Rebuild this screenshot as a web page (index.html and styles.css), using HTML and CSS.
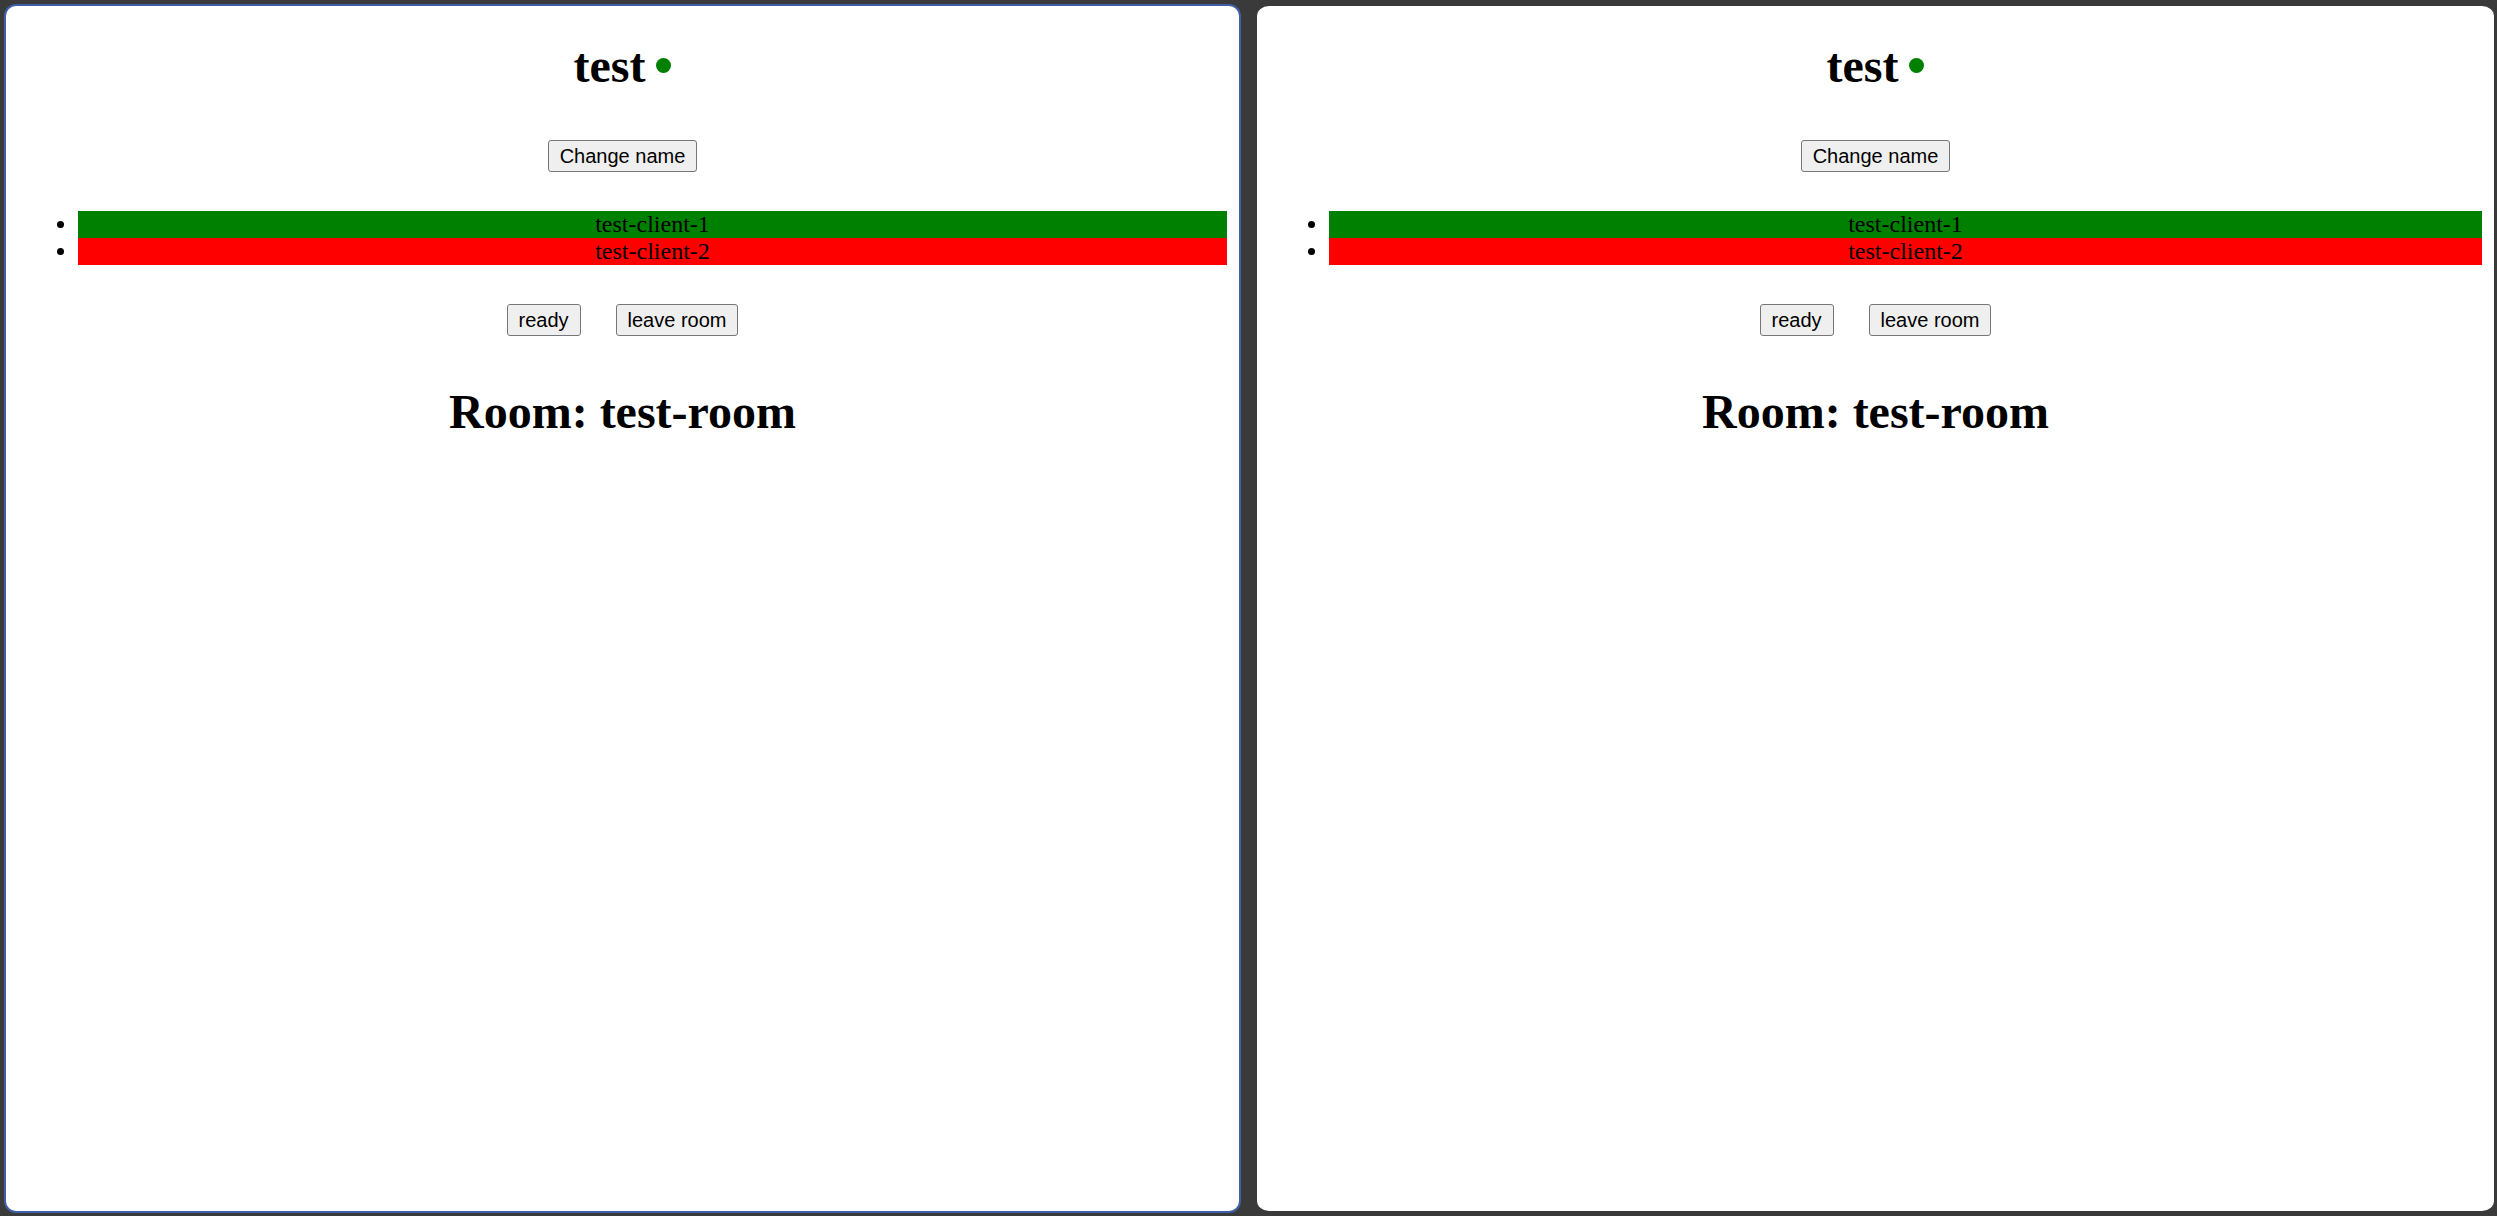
FILE: index.html
```html
<!DOCTYPE html>
<html>
<head>
<meta charset="utf-8">
<title>Rooms</title>
<link rel="stylesheet" href="styles.css">
</head>
<body>
<div class="desk">
  <section class="pane pane-focused">
    <h1 class="title">test<span class="dot"></span></h1>
    <div class="name-row"><button class="btn">Change name</button></div>
    <ul class="clients">
      <li class="client ready">test-client-1</li>
      <li class="client waiting">test-client-2</li>
    </ul>
    <div class="actions"><button class="btn">ready</button><button class="btn">leave room</button></div>
    <h1 class="room">Room: test-room</h1>
  </section>
  <section class="pane">
    <h1 class="title">test<span class="dot"></span></h1>
    <div class="name-row"><button class="btn">Change name</button></div>
    <ul class="clients">
      <li class="client ready">test-client-1</li>
      <li class="client waiting">test-client-2</li>
    </ul>
    <div class="actions"><button class="btn">ready</button><button class="btn">leave room</button></div>
    <h1 class="room">Room: test-room</h1>
  </section>
</div>
</body>
</html>
```

FILE: styles.css
```css
html, body {
  margin: 0;
  padding: 0;
  height: 100%;
}
body {
  background: #3a3a3a;
  font-family: "Liberation Serif", "Times New Roman", serif;
  font-size: 24px;
  color: #000;
}
.desk {
  box-sizing: border-box;
  height: 100vh;
  padding: 4px 3px 3px 4px;
  display: grid;
  grid-template-columns: 1fr 1fr;
  gap: 16px;
}
.pane {
  min-width: 0;
  background: #fff;
  border-style: solid;
  border-color: #3a3a3a;
  border-width: 2px 0;
  border-radius: 12px;
  padding: 0 12px;
  overflow: hidden;
}
.pane-focused {
  border-width: 2px;
  border-color: #3f5fa6;
}
.title {
  margin: 32px 0 0;
  font-size: 48px;
  font-weight: bold;
  text-align: center;
  line-height: 55px;
}
.dot {
  display: inline-block;
  width: 15px;
  height: 15px;
  border-radius: 50%;
  background: #008000;
  margin-left: 11px;
  vertical-align: 9px;
}
.name-row {
  margin-top: 47px;
  display: flex;
  justify-content: center;
}
.btn {
  box-sizing: border-box;
  height: 32px;
  padding: 0 11px;
  font-family: "Liberation Sans", Arial, sans-serif;
  font-size: 20px;
  color: #000;
  background: #efefef;
  border: 1px solid #767676;
  border-radius: 3px;
}
.clients {
  margin: 39px 0 0;
  padding: 0 0 0 60px;
}
.client {
  text-align: center;
  line-height: 27px;
  height: 27px;
}
.ready { background: #008000; }
.waiting { background: #ff0000; }
.actions {
  margin-top: 39px;
  display: flex;
  justify-content: center;
  gap: 35px;
}
.room {
  margin: 48px 0 0;
  font-size: 48px;
  font-weight: bold;
  text-align: center;
  line-height: 55px;
}
```
